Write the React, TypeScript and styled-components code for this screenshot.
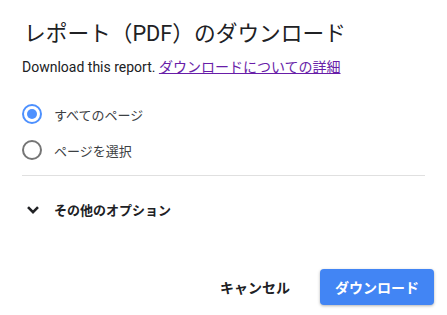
import React, { FunctionComponent, useState } from 'react';
import styled, { createGlobalStyle } from 'styled-components';

const GlobalStyle = createGlobalStyle`
  html, body {
    margin: 0;
    padding: 0;
    background: #fff;
  }
  body {
    font-family: Roboto, 'Noto Sans CJK JP', 'Noto Sans', sans-serif;
    color: #202124;
  }
`;

const options = [
  { id: 'all', label: 'すべてのページ' },
  { id: 'select', label: 'ページを選択' },
];

const App: FunctionComponent = () => {
  const [selected, setSelected] = useState('all');

  return (
    <>
      <GlobalStyle />
      <Dialog>
        <Title>レポート（PDF）のダウンロード</Title>
        <Subtitle>
          Download this report. <a href="#">ダウンロードについての詳細</a>
        </Subtitle>

        <RadioGroup>
          {options.map((o) => (
            <RadioRow key={o.id} onClick={() => setSelected(o.id)}>
              <Radio checked={selected === o.id} />
              <RadioLabel>{o.label}</RadioLabel>
            </RadioRow>
          ))}
        </RadioGroup>

        <Divider />

        <MoreOptions>
          <svg width="14" height="10" viewBox="0 0 14 10">
            <path
              d="M2 2.2 L7 7.2 L12 2.2"
              fill="none"
              stroke="#202124"
              strokeWidth="2.6"
            />
          </svg>
          <span>その他のオプション</span>
        </MoreOptions>

        <Actions>
          <TextButton>キャンセル</TextButton>
          <PrimaryButton>ダウンロード</PrimaryButton>
        </Actions>
      </Dialog>
    </>
  );
};

const Dialog = styled.div`
  width: 447px;
  height: 315px;
  box-sizing: border-box;
  padding: 19px 22px 0 22px;
  display: flex;
  flex-direction: column;
`;

const Title = styled.h2`
  margin: 0 0 0 2px;
  font-size: 21.7px;
  font-weight: 400;
  line-height: 30px;
  color: #202124;
`;

const Subtitle = styled.p`
  margin: 8px 0 0;
  font-size: 14px;
  line-height: 20px;
  color: #202124;
  a {
    color: #681da8;
    text-decoration: underline;
  }
`;

const RadioGroup = styled.div`
  margin-top: 27px;
  display: flex;
  flex-direction: column;
  gap: 16px;
`;

const RadioRow = styled.label`
  display: flex;
  align-items: center;
  height: 20px;
  cursor: pointer;
`;

const RadioLabel = styled.span`
  margin-left: 12px;
  font-size: 13px;
  color: #3c4043;
`;

const Radio = styled.div<{ checked: boolean }>`
  width: 20px;
  height: 20px;
  box-sizing: border-box;
  border-radius: 50%;
  border: 2px solid ${(p) => (p.checked ? '#4d90fe' : '#757575')};
  display: flex;
  align-items: center;
  justify-content: center;
  &::after {
    content: '';
    width: 10px;
    height: 10px;
    border-radius: 50%;
    background: ${(p) => (p.checked ? '#4d90fe' : 'transparent')};
  }
`;

const Divider = styled.div`
  margin-top: 15px;
  height: 1px;
  background-color: #e0e0e0;
`;

const MoreOptions = styled.div`
  margin-top: 24px;
  display: flex;
  align-items: center;
  font-size: 13px;
  font-weight: 700;
  color: #202124;
  svg {
    margin-left: 4px;
  }
  span {
    margin-left: 14px;
  }
`;

const Actions = styled.div`
  margin-top: auto;
  margin-bottom: 10px;
  display: flex;
  justify-content: flex-end;
  align-items: center;
  gap: 20px;
`;

const TextButton = styled.button`
  border: none;
  background: none;
  font-family: inherit;
  font-size: 14px;
  font-weight: 700;
  color: #202124;
  padding: 0 10px;
  height: 36px;
  cursor: pointer;
`;

const PrimaryButton = styled.button`
  width: 114px;
  height: 36px;
  margin-right: -9px;
  border: none;
  border-radius: 4px;
  background: #4285f4;
  color: #fff;
  font-family: inherit;
  font-size: 14px;
  font-weight: 700;
  box-shadow: 0 1px 3px rgba(0, 0, 0, 0.3);
  cursor: pointer;
`;

export default App;
